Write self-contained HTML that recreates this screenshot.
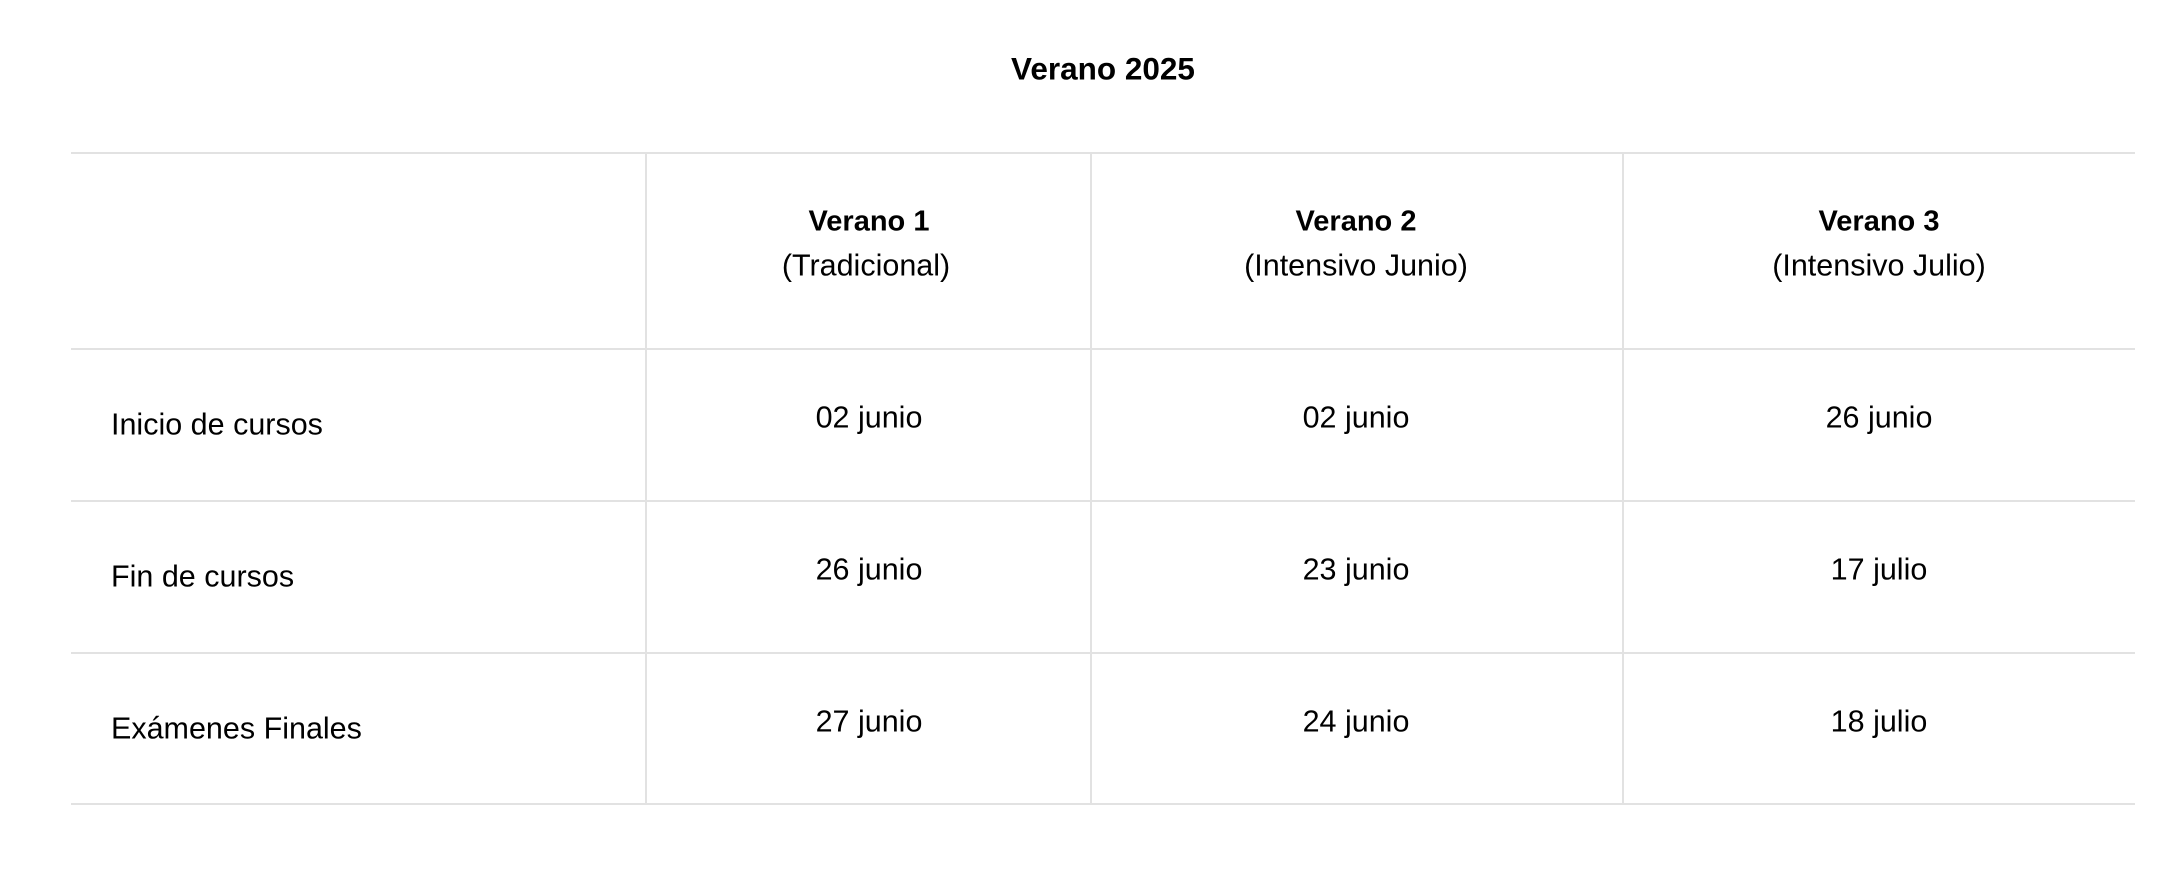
<!DOCTYPE html>
<html><head><meta charset="utf-8"><style>
body{margin:0;width:2170px;height:872px;background:#fff;font-family:"Liberation Sans",Arial,sans-serif;color:#000;position:relative;overflow:hidden}
.t{position:absolute;white-space:nowrap;transform:translate(-50%,-50%)}
.l{position:absolute;white-space:nowrap;transform:translateY(-50%);left:111px;font-size:30.5px}
.h{position:absolute;background:#e2e2e2;height:2px;left:71px;width:2064px}
.v{position:absolute;background:#e2e2e2;width:2px;top:152px;height:652px}
.b{font-weight:bold;font-size:29px}
.n{font-size:30.5px}
</style></head><body>
<div class="t b" style="left:1103px;top:69px;font-size:31.5px">Verano 2025</div>
<div class="h" style="top:152px"></div>
<div class="h" style="top:348px"></div>
<div class="h" style="top:500px"></div>
<div class="h" style="top:652px"></div>
<div class="h" style="top:803px"></div>
<div class="v" style="left:645px"></div>
<div class="v" style="left:1090px"></div>
<div class="v" style="left:1622px"></div>

<div class="t b" style="left:869px;top:222px">Verano 1</div>
<div class="t n" style="left:866px;top:266px">(Tradicional)</div>
<div class="t b" style="left:1356px;top:222px">Verano 2</div>
<div class="t n" style="left:1356px;top:266px">(Intensivo Junio)</div>
<div class="t b" style="left:1879px;top:222px">Verano 3</div>
<div class="t n" style="left:1879px;top:266px">(Intensivo Julio)</div>

<div class="l" style="top:425px">Inicio de cursos</div>
<div class="t n" style="left:869px;top:418px">02 junio</div>
<div class="t n" style="left:1356px;top:418px">02 junio</div>
<div class="t n" style="left:1879px;top:418px">26 junio</div>

<div class="l" style="top:577px">Fin de cursos</div>
<div class="t n" style="left:869px;top:570px">26 junio</div>
<div class="t n" style="left:1356px;top:570px">23 junio</div>
<div class="t n" style="left:1879px;top:570px">17 julio</div>

<div class="l" style="top:729px">Exámenes Finales</div>
<div class="t n" style="left:869px;top:722px">27 junio</div>
<div class="t n" style="left:1356px;top:722px">24 junio</div>
<div class="t n" style="left:1879px;top:722px">18 julio</div>
</body></html>
